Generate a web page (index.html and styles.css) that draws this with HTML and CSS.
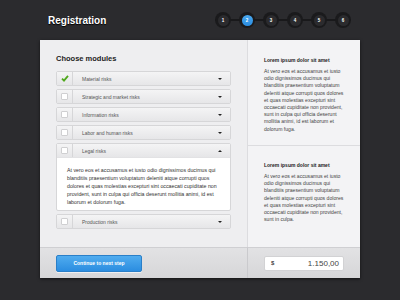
FILE: index.html
```html
<!DOCTYPE html>
<html>
	<head>
		<meta charset="utf-8" />
		<title>Registration</title>
		<link rel="stylesheet" href="styles.css">
	</head>
	<body>
		<div class="top">
			<h1>Registration</h1>
			<ul class="steps">
				<li><span>1</span></li>
				<li class="active"><span>2</span></li>
				<li><span>3</span></li>
				<li><span>4</span></li>
				<li><span>5</span></li>
				<li><span>6</span></li>
			</ul>
		</div>
		<div class="panel">
			<div class="modules">
				<h2>Choose modules</h2>
				<div class="module checked">
					<div class="module-head">
						<span class="check">
							<svg width="8" height="7" viewBox="0 0 8 7"><path d="M1 3.6 L3 5.6 L7 0.8" fill="none" stroke="#4fa81c" stroke-width="1.8"/></svg>
						</span>
						<span class="name">Material risks</span>
						<span class="arrow down"></span>
					</div>
				</div>
				<div class="module">
					<div class="module-head">
						<span class="check"><i></i></span>
						<span class="name">Strategic and market risks</span>
						<span class="arrow down"></span>
					</div>
				</div>
				<div class="module">
					<div class="module-head">
						<span class="check"><i></i></span>
						<span class="name">Information risks</span>
						<span class="arrow down"></span>
					</div>
				</div>
				<div class="module">
					<div class="module-head">
						<span class="check"><i></i></span>
						<span class="name">Labor and human risks</span>
						<span class="arrow down"></span>
					</div>
				</div>
				<div class="module open">
					<div class="module-head">
						<span class="check"><i></i></span>
						<span class="name">Legal risks</span>
						<span class="arrow up"></span>
					</div>
					<div class="module-body">At vero eos et accusamus et iusto odio dignissimos ducimus qui blanditiis praesentium voluptatum deleniti atque corrupti quos dolores et quas molestias excepturi sint occaecati cupiditate non provident, sunt in culpa qui officia deserunt mollitia animi, id est laborum et dolorum fuga.</div>
				</div>
				<div class="module">
					<div class="module-head">
						<span class="check"><i></i></span>
						<span class="name">Production risks</span>
						<span class="arrow down"></span>
					</div>
				</div>
			</div>
			<div class="side">
				<div class="note">
					<h3>Lorem ipsum dolor sit amet</h3>
					<p>At vero eos et accusamus et iusto odio dignissimos ducimus qui blanditiis praesentium voluptatum deleniti atque corrupti quos dolores et quas molestias excepturi sint occaecati cupiditate non provident, sunt in culpa qui officia deserunt mollitia animi, id est laborum et dolorum fuga.</p>
				</div>
				<div class="note">
					<h3>Lorem ipsum dolor sit amet</h3>
					<p>At vero eos et accusamus et iusto odio dignissimos ducimus qui blanditiis praesentium voluptatum deleniti atque corrupti quos dolores et quas molestias excepturi sint occaecati cupiditate non provident, sunt in culpa.</p>
				</div>
			</div>
			<div class="foot-left">
				<button class="next">Continue to next step</button>
			</div>
			<div class="foot-right">
				<div class="total"><b>$</b><span>1.150,00</span></div>
			</div>
		</div>
	</body>
</html>
```
FILE: styles.css
```css
body {
	margin: 0;
	padding: 0;
	height: 300px;
	background-color: #2b2b2e;
	font-family: "Liberation Sans", Arial, sans-serif;
	color: #333;
}
ul {
	list-style: none;
	padding: 0;
	margin: 0;
}
.top {
	height: 40px;
	display: flex;
	align-items: center;
	justify-content: space-between;
	padding: 0 49px 0 48px;
}
.top h1 {
	margin: 0;
	font-size: 10px;
	font-weight: bold;
	color: #fff;
	text-shadow: 0 1px 1px #000;
}
.steps {
	display: flex;
	align-items: center;
	gap: 8px;
	background: linear-gradient(#19191b, #19191b) no-repeat center / 100% 2px;
}
.steps li {
	width: 16px;
	height: 16px;
	border-radius: 50%;
	background-color: #1a1a1c;
	display: flex;
	align-items: center;
	justify-content: center;
}
.steps span {
	width: 11px;
	height: 11px;
	border-radius: 50%;
	background-color: #2b2b2e;
	color: #fff;
	font-size: 4.5px;
	font-weight: bold;
	line-height: 11px;
	text-align: center;
}
.steps .active span {
	background: linear-gradient(#4aa9f0, #2a8ce0);
}
.panel {
	margin: 0 40px;
	width: 320px;
	height: 238px;
	display: grid;
	grid-template-columns: 208px 112px;
	grid-template-rows: 207px 31px;
	background-color: #eeeef0;
	box-shadow: 0 1px 3px rgba(0, 0, 0, 0.6);
	box-sizing: border-box;
	border-bottom: 1px solid #aaa;
}
.modules {
	padding: 14px 16px 0 16px;
	border-right: 1px solid #dcdcdf;
}
.modules h2 {
	margin: 0 0 7px 0;
	font-size: 7.5px;
	font-weight: bold;
	color: #222;
	line-height: 10px;
}
.module {
	margin-bottom: 3px;
	border: 1px solid #d6d6d8;
	border-radius: 2px;
	background-color: #fff;
}
.module-head {
	height: 13px;
	display: flex;
	align-items: center;
	background: linear-gradient(#f4f4f5, #e6e6e8);
	font-size: 5px;
	color: #555;
}
.check {
	width: 15px;
	height: 13px;
	border-right: 1px solid #d6d6d8;
	display: flex;
	align-items: center;
	justify-content: center;
}
.check i {
	width: 5px;
	height: 5px;
	border: 1px solid #cfcfd1;
	background-color: #fff;
	border-radius: 1px;
}
.name {
	flex: 1;
	padding-left: 9px;
}
.arrow {
	width: 0;
	height: 0;
	margin-right: 8px;
	border-left: 2px solid transparent;
	border-right: 2px solid transparent;
}
.arrow.down {
	border-top: 2px solid #222;
}
.arrow.up {
	border-bottom: 2px solid #222;
}
.module-body {
	height: 53px;
	box-sizing: border-box;
	padding: 8px 6px 0 10px;
	font-size: 5.25px;
	line-height: 8px;
	color: #333;
	border-top: 1px solid #e2e2e4;
}
.side {
	background-color: #f3f3f5;
	display: flex;
	flex-direction: column;
}
.note {
	padding: 17px 14px 0 16px;
	border-bottom: 1px solid #dcdcdf;
}
.note:first-child {
	height: 106px;
	box-sizing: border-box;
}
.note:last-child {
	flex: 1;
	border-bottom: none;
	padding-top: 16px;
}
.note h3 {
	margin: 0 0 4px 0;
	font-size: 5px;
	font-weight: bold;
	color: #222;
	line-height: 7px;
}
.note p {
	margin: 0;
	font-size: 5.1px;
	line-height: 7.2px;
	color: #444;
}
.foot-left,
.foot-right {
	background: linear-gradient(#e2e2e4, #d6d6d8);
	border-top: 1px solid #cfcfd2;
	display: flex;
	align-items: center;
}
.foot-left {
	padding-left: 16px;
	border-right: 1px solid #cacacd;
}
.foot-right {
	padding-left: 16px;
}
.next {
	width: 86px;
	height: 17px;
	padding: 0;
	border: 1px solid #2a7fc8;
	border-radius: 2px;
	background: linear-gradient(#50acef, #2b8de0);
	color: #fff;
	font-family: "Liberation Sans", Arial, sans-serif;
	font-size: 5px;
	font-weight: bold;
	box-shadow: 0 1px 0 rgba(255, 255, 255, 0.6);
}
.total {
	width: 80px;
	height: 15px;
	box-sizing: border-box;
	display: flex;
	align-items: center;
	justify-content: space-between;
	padding: 0 4px 0 6px;
	background-color: #fff;
	border: 1px solid #d2d2d4;
	border-radius: 2px;
	color: #444;
}
.total b {
	font-size: 6px;
}
.total span {
	font-size: 8px;
}
```
